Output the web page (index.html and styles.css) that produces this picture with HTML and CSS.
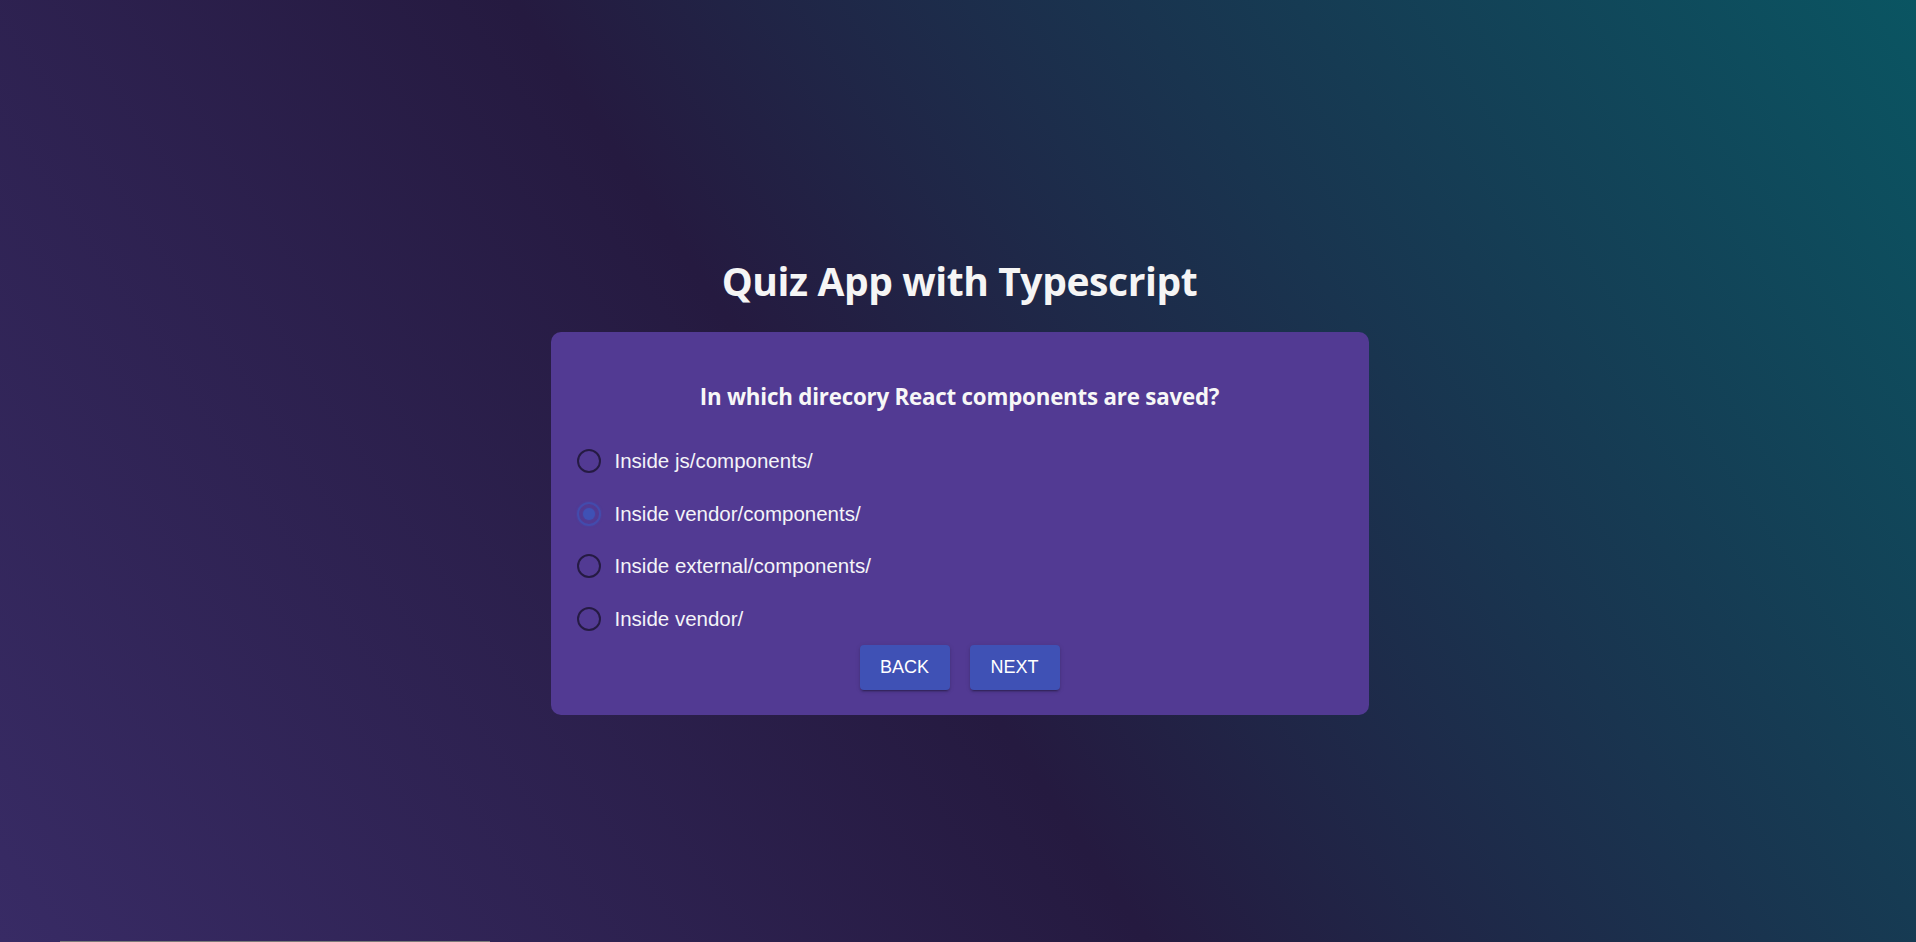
FILE: index.html
```html
<!DOCTYPE html>
<html lang="en">
<head>
<meta charset="utf-8">
<title>Quiz App with Typescript</title>
<link rel="stylesheet" href="styles.css">
</head>
<body>
<div class="page">
  <h1 class="title">Quiz App with Typescript</h1>
  <div class="card">
    <h2 class="question">In which direcory React components are saved?</h2>
    <div class="options">
      <label class="option"><span class="radio"></span><span class="label">Inside js/components/</span></label>
      <label class="option"><span class="radio checked"><span class="dot"></span></span><span class="label">Inside vendor/components/</span></label>
      <label class="option"><span class="radio"></span><span class="label">Inside external/components/</span></label>
      <label class="option"><span class="radio"></span><span class="label">Inside vendor/</span></label>
    </div>
    <div class="actions">
      <button class="btn">BACK</button>
      <button class="btn">NEXT</button>
    </div>
  </div>
</div>
<div class="scrollbar"></div>
</body>
</html>
```

FILE: styles.css
```css
html, body {
  margin: 0;
  padding: 0;
  height: 100%;
  overflow: hidden;
}
body {
  background: linear-gradient(56deg, #382b65 0%, #251a40 45%, #0a5562 100%);
  font-family: "Liberation Sans", Arial, sans-serif;
  color: #fff;
}
.page {
  display: flex;
  flex-direction: column;
  align-items: center;
  padding-top: 257px;
  padding-left: 3px;
}
.title {
  margin: 0 0 27px;
  font-family: "Open Sans", "Noto Sans", sans-serif;
  font-weight: 700;
  font-size: 39px;
  line-height: 48px;
  color: #f5f5f5;
  letter-spacing: -0.4px;
}
.card {
  box-sizing: border-box;
  width: 818px;
  background: #523a93;
  border-radius: 10px;
  padding: 51px 16px 25px;
}
.question {
  margin: 0 0 24px;
  text-align: center;
  font-family: "Open Sans", "Noto Sans", sans-serif;
  font-weight: 700;
  font-size: 22.3px;
  line-height: 28px;
  color: #f7f7f7;
  letter-spacing: -0.2px;
}
.options {
  display: flex;
  flex-direction: column;
}
.option {
  display: flex;
  align-items: center;
  height: 52.5px;
}
.radio {
  box-sizing: border-box;
  width: 24px;
  height: 24px;
  margin: 0 14px 0 10px;
  border-radius: 50%;
  border: 2px solid rgba(0, 0, 0, 0.54);
  display: flex;
  align-items: center;
  justify-content: center;
}
.radio.checked {
  border-color: rgba(63, 81, 181, 0.75);
  box-shadow: 0 0 2px rgba(63, 81, 181, 0.6);
}
.dot {
  width: 12px;
  height: 12px;
  border-radius: 50%;
  background: #3f51b5;
  box-shadow: 0 0 2px rgba(63, 81, 181, 0.7);
}
.label {
  font-size: 20.5px;
  color: #f4f4f8;
}
.actions {
  display: flex;
  justify-content: center;
  gap: 20px;
}
.btn {
  width: 90px;
  height: 45px;
  border: none;
  border-radius: 4px;
  background: #3f51b5;
  color: #fff;
  font-family: "Liberation Sans", Arial, sans-serif;
  font-size: 18px;
  box-shadow: 0 3px 1px -2px rgba(0,0,0,0.2), 0 2px 2px 0 rgba(0,0,0,0.14), 0 1px 5px 0 rgba(0,0,0,0.12);
  cursor: pointer;
}
.scrollbar {
  position: fixed;
  left: 60px;
  bottom: 0;
  width: 430px;
  height: 1px;
  background: #7a7a7a;
}
```
